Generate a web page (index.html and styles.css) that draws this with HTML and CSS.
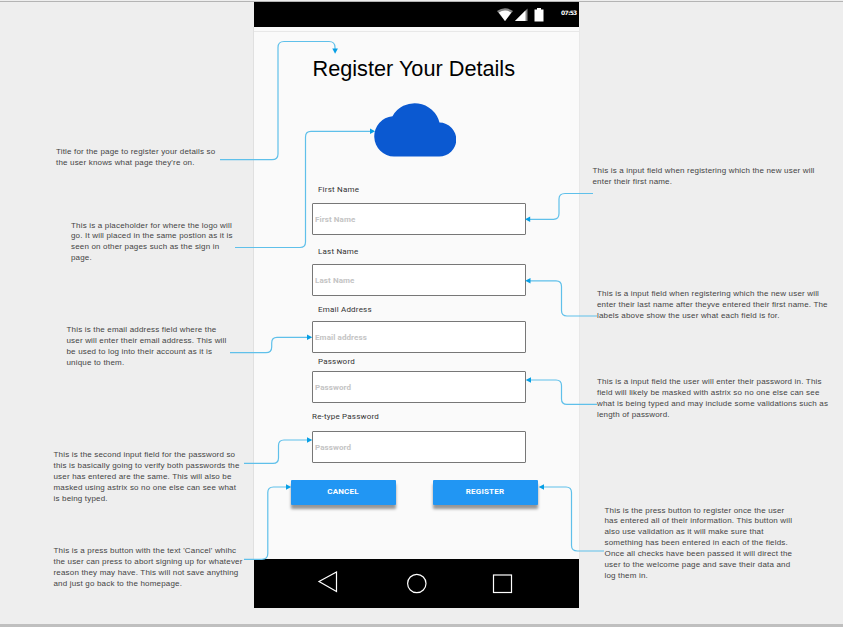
FILE: index.html
```
<!DOCTYPE html>
<html lang="en">
<head>
<meta charset="utf-8">
<title>Register Your Details</title>
<link rel="stylesheet" href="styles.css">
</head>
<body>
<main class="board">
  <section class="notes notes-left">
    <p class="note n-title">Title for the page to register your details so<br>the user knows what page they're on.</p>
    <p class="note n-logo">This is a placeholder for where the logo will<br>go. It will placed in the same postion as it is<br>seen on other pages such as the sign in<br>page.</p>
    <p class="note n-email">This is the email address field where the<br>user will enter their email address. This will<br>be used to log into their account as it is<br>unique to them.</p>
    <p class="note n-retype">This is the second input field for the password so<br>this is basically going to verify both passwords the<br>user has entered are the same. This will also be<br>masked using astrix so no one else can see what<br>is being typed.</p>
    <p class="note n-cancel">This is a press button with the text 'Cancel' whihc<br>the user can press to abort signing up for whatever<br>reason they may have. This will not save anything<br>and just go back to the homepage.</p>
  </section>

  <section class="phone">
    <header class="status">
      <svg class="status-icons" width="48" height="16" viewBox="0 0 48 16">
        <path d="M0 4Q8-1.500 16 4L8 14Z" fill="#888"/>
        <path d="M1.800 5.500Q8 1.500 14.200 5.500L8 14Z" fill="#fff"/>
        <path d="M18 14L30.500 1.500V14Z" fill="#888"/>
        <path d="M18 14L28.500 3.500V14Z" fill="#fff"/>
        <path d="M37.500 2.500H40V1H44V2.500H46.500V14.500H37.500Z" fill="#fff"/>
      </svg>
      <span class="clock">07:53</span>
    </header>
    <div class="screen">
      <h1 class="title">Register Your Details</h1>
      <svg class="cloud" width="82" height="55" viewBox="0 0 82 55">
        <path d="M20 54.500A20.200 20.200 0 0 1 18.500 14.200A25.500 25.500 0 0 1 65.500 20.500A17 17 0 0 1 65 54.500Z" fill="#0b59d1"/>
      </svg>
      <form class="form">
        <label class="label l-first" for="first">First Name</label>
        <input class="field" id="first" placeholder="First Name">
        <label class="label l-last" for="last">Last Name</label>
        <input class="field" id="last" placeholder="Last Name">
        <label class="label l-email" for="email">Email Address</label>
        <input class="field" id="email" placeholder="Email address">
        <label class="label l-pass" for="pass">Password</label>
        <input class="field" id="pass" type="password" placeholder="Password">
        <label class="label l-retype" for="retype">Re-type Password</label>
        <input class="field" id="retype" type="password" placeholder="Password">
      </form>
      <div class="actions">
        <button class="btn">CANCEL</button>
        <button class="btn">REGISTER</button>
      </div>
    </div>
    <nav class="navbar">
      <svg width="325" height="49" viewBox="0 0 325 49" fill="none" stroke="#fff" stroke-width="1.200">
        <path d="M82.500 13V32.500L65 22.500Z"/>
        <circle cx="162.800" cy="24.500" r="9.200"/>
        <rect x="239.500" y="16" width="18" height="17.500"/>
      </svg>
    </nav>
  </section>

  <section class="notes notes-right">
    <p class="note n-first">This is a input field when registering which the new user will<br>enter their first name.</p>
    <p class="note n-last">This is a input field when registering which the new user will<br>enter their last name after theyve entered their first name. The<br>labels above show the user what each field is for.</p>
    <p class="note n-pass">This is a input field the user will enter their password in. This<br>field will likely be masked with astrix so no one else can see<br>what is being typed and may include some validations such as<br>length of password.</p>
    <p class="note n-register">This is the press button to register once the user<br>has entered all of their information. This button will<br>also use validation as it will make sure that<br>something has been entered in each of the fields.<br>Once all checks have been passed it will direct the<br>user to the welcome page and save their data and<br>log them in.</p>
  </section>

  <svg class="connectors" width="843" height="627" viewBox="0 0 843 627">
    <g fill="none" stroke="#5fc0ea" stroke-width="1.200">
      <path d="M220 159.700H272Q278 159.700 278 154V47.500Q278 41.500 284 41.500H329Q335 41.500 335 47.500V49"/>
      <path d="M235 247.500H300Q305.500 247.500 305.500 242V137Q305.500 131.300 311 131.300H371"/>
      <path d="M230 352.700H266Q271.700 352.700 271.700 347V343Q271.700 337.300 277 337.300H308"/>
      <path d="M244 463.400H273Q278.500 463.400 278.500 458V445.500Q278.500 440 284 440H308"/>
      <path d="M244 559.300H262Q267.800 559.300 267.800 553.500V492.500Q267.800 487 273.500 487H287"/>
      <path d="M593 193.500H565Q559 193.500 559 199V213.500Q559 219.300 553.500 219.300H529"/>
      <path d="M597 316H567Q561.500 316 561.500 310.500V286.500Q561.500 280.800 556 280.800H529"/>
      <path d="M597 404.400H567Q561.500 404.400 561.500 399V385.500Q561.500 380 556 380H529"/>
      <path d="M604 551H577.500Q571.500 551 571.500 545.500V492.500Q571.500 487 566 487H542"/>
    </g>
    <g fill="#079fe5">
      <path d="M332.300 48.500H337.900L335.100 53.700Z"/>
      <path d="M370 128.500V134L375.200 131.300Z"/>
      <path d="M307 334.600V340L312.300 337.300Z"/>
      <path d="M307 437.300V442.700L312.300 440Z"/>
      <path d="M286 484.300V489.700L291.200 487Z"/>
      <path d="M530.200 216.600V222L525 219.300Z"/>
      <path d="M530.500 278.100V283.500L525.200 280.800Z"/>
      <path d="M531 377.300V382.700L525.700 380Z"/>
      <path d="M544 484.300V489.700L538.700 487Z"/>
    </g>
  </svg>
</main>
</body>
</html>
```
FILE: styles.css
```
* { box-sizing: border-box; }
body { margin: 0; background: #eee; font-family: "Liberation Sans", Arial, sans-serif; }
.board {
  position: relative;
  display: grid;
  grid-template-columns: 254px 325px 264px;
  width: 843px;
  height: 627px;
  overflow: hidden;
  padding-top: 1px;
  border-bottom: 3px solid #bfbfbf;
  background: linear-gradient(#b4b4b4, #b4b4b4) 0 1px / 100% 1px no-repeat #eee;
}
.connectors { position: absolute; left: 0; top: 0; pointer-events: none; }

.notes { display: flex; flex-direction: column; align-items: flex-start; }
.note {
  margin: 0;
  color: #444;
  font-size: 8px;
  letter-spacing: 0.175px;
  line-height: 10.9px;
  white-space: nowrap;
}
.notes-left .note { line-height: 10.8px; }
.n-title { margin: 145.800px 0 0 56px; }
.n-logo { margin: 52.300px 0 0 71px; }
.n-email { margin: 61.500px 0 0 66.500px; }
.n-retype { margin: 81.900px 0 0 53.500px; }
.n-cancel { margin: 42px 0 0 53.500px; }
.n-first { margin: 164.800px 0 0 13.500px; }
.n-last { margin: 101.300px 0 0 18px; }
.n-pass { margin: 55.200px 0 0 18px; }
.n-register { margin: 85.100px 0 0 25.500px; }

.phone { padding-top: 1px; }
.status {
  display: flex;
  justify-content: flex-end;
  height: 25px;
  padding: 5px 3px 0 0;
  background: #000;
}
.status-icons { margin-right: 16px; }
.clock { color: #fff; font: bold 6px/11px "DejaVu Sans", sans-serif; letter-spacing: -0.7px; width: 15px; white-space: nowrap; }
.screen {
  height: 532px;
  background: linear-gradient(#e8e8e8, #e8e8e8) 0 4px / 100% 1px no-repeat #fafafa;
  box-shadow: -1px 0 #e0e0e0, 1px 0 #e8e8e8;
  padding-top: 28px;
}
.title {
  margin: 0 0 0 58.500px;
  font-size: 21.700px;
  line-height: 27px;
  font-weight: 400;
  color: #000;
  white-space: nowrap;
}
.cloud { display: block; margin: 20px 0 1px 120.400px; }
.form { display: flex; flex-direction: column; width: 214px; margin-left: 58px; }
.label {
  padding-left: 6px;
  height: 10px;
  color: #333;
  font: 8px/10px Roboto, sans-serif;
  letter-spacing: 0.2px;
}
.l-first { margin: 27px 0 8px; }
.l-last { margin: 12px 0 7px; }
.l-email { margin: 9px 0 6px; }
.l-pass { margin: 4px 0 4px; }
.l-retype { margin: 9px 0 9px; padding-left: 0; }
.field {
  width: 214px;
  height: 32px;
  padding: 0 2px;
  border: 1px solid #777;
  border-radius: 1px;
  background: #fff;
  font: 700 8px Roboto, sans-serif;
  letter-spacing: 0.1px;
}
.field::placeholder { color: #c4c4c4; opacity: 1; }
.actions { display: flex; gap: 37px; margin: 17px 0 0 37px; }
.btn {
  width: 105px;
  height: 25px;
  padding: 0 1px 2px 0;
  border: 0;
  border-radius: 1px;
  background: #2196f3;
  box-shadow: 0 4px 3px rgba(0, 0, 0, 0.4);
  color: #fff;
  font: 700 8px Roboto, sans-serif;
  letter-spacing: 0.2px;
}
.navbar { height: 49px; background: #000; }
.navbar svg { display: block; }
```
